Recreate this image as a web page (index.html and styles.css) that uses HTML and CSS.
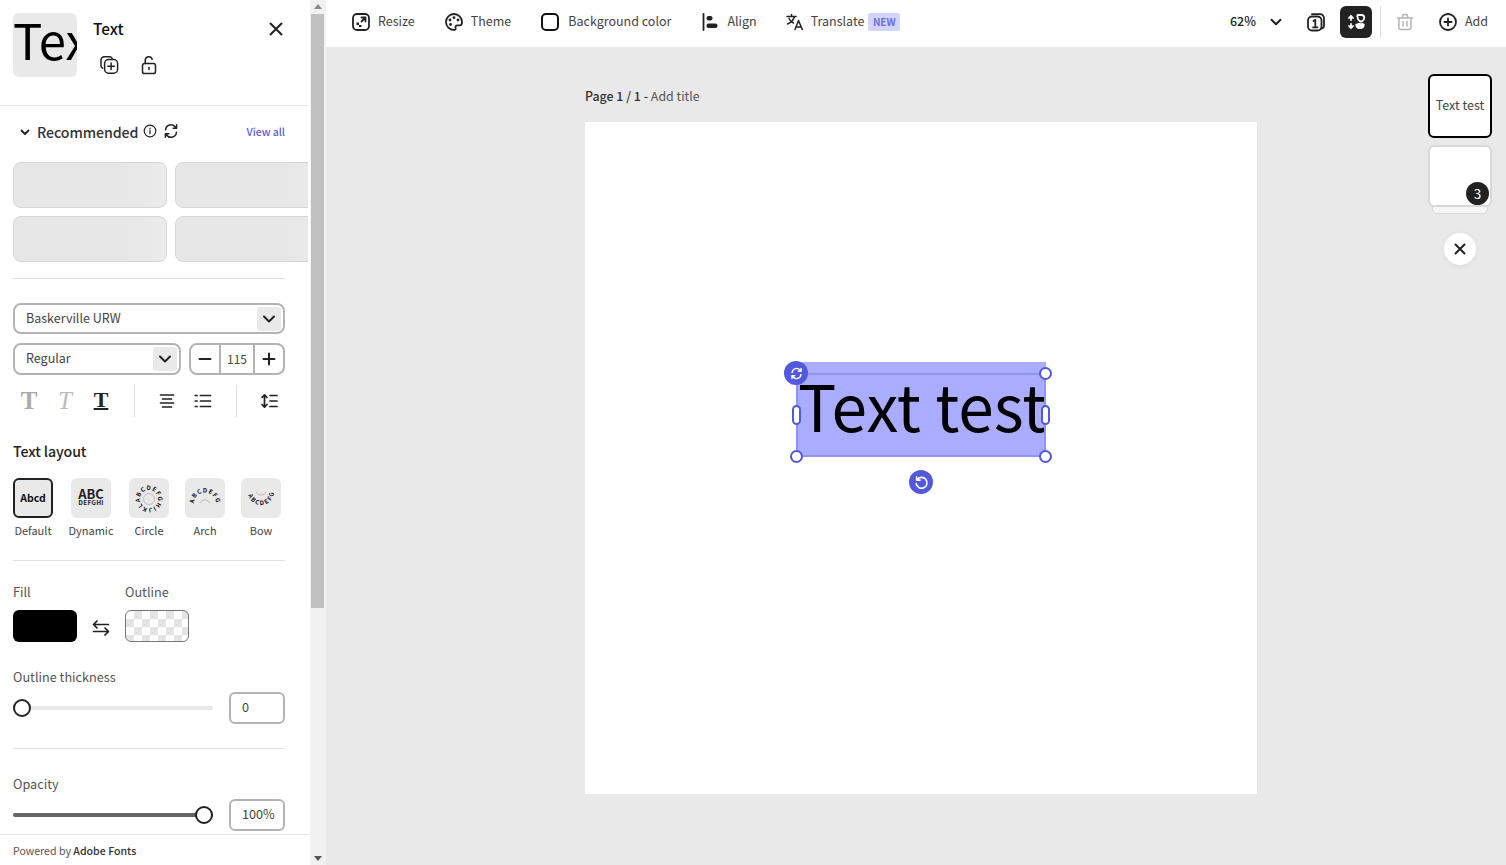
FILE: index.html
```html
<!DOCTYPE html>
<html lang="en">
<head>
<meta charset="utf-8">
<title>Text editor</title>
<link rel="stylesheet" href="styles.css">
</head>
<body>
<div class="app">
  <aside class="sidebar">
    <div class="panel">
      <header class="panel-head">
        <div class="preview"><span>Text</span></div>
        <div class="head-main">
          <div class="head-title">Text</div>
          <div class="head-actions">
            <svg class="ico" viewBox="0 0 20 20"><path d="M3.600 13.200A3 3 0 0 1 2 10.500V5a3.200 3.200 0 0 1 3.200-3.200h5.300a3 3 0 0 1 2.700 1.600"/><rect x="5.600" y="4.600" width="13" height="13.600" rx="4"/><path d="M12.100 8v6.600M8.800 11.300h6.600"/></svg>
            <svg class="ico" viewBox="0 0 20 20"><rect x="3.500" y="8.600" width="13" height="10" rx="2.200"/><path d="M6.200 8.600V5.400a3.600 3.600 0 0 1 7-1.200"/><path d="M10 12.400v2.200"/></svg>
          </div>
        </div>
        <svg class="ico close" viewBox="0 0 20 20"><path d="M4.500 4.500l11 11M15.500 4.500l-11 11"/></svg>
      </header>
      <section class="rec">
        <div class="rec-head">
          <svg class="ico chev-s" viewBox="0 0 12 12"><path d="M2.500 4.500L6 8l3.500-3.500"/></svg>
          <span class="rec-title">Recommended</span>
          <svg class="ico info" viewBox="0 0 14 14"><circle cx="7" cy="7" r="5.800"/><path d="M7 6.400v3.400M7 4v.9"/></svg>
          <svg class="ico sync" viewBox="0 0 16 16"><path d="M2.600 6.800A5.400 5.400 0 0 1 12.400 4l1.200 1.300M13.600 1.800v3.500h-3.500M13.400 9.200A5.400 5.400 0 0 1 3.600 12l-1.200-1.300M2.400 14.200v-3.500h3.500"/></svg>
          <a class="view-all">View all</a>
        </div>
        <div class="chips">
          <div class="chip"></div><div class="chip"></div>
          <div class="chip"></div><div class="chip"></div>
        </div>
      </section>
      <hr class="rule rule-rec">
      <div class="select select-font"><span>Baskerville URW</span><i class="sel-btn"><svg class="ico" viewBox="0 0 14 14"><path d="M2 4.500L7 9.500l5-5"/></svg></i></div>
      <div class="row-font">
        <div class="select select-weight"><span>Regular</span><i class="sel-btn"><svg class="ico" viewBox="0 0 14 14"><path d="M2 4.500L7 9.500l5-5"/></svg></i></div>
        <div class="stepper">
          <span class="step-btn"><svg class="ico" viewBox="0 0 14 14"><path d="M1.500 7h11"/></svg></span>
          <span class="step-val">115</span>
          <span class="step-btn"><svg class="ico" viewBox="0 0 14 14"><path d="M1.500 7h11M7 1.500v11"/></svg></span>
        </div>
      </div>
      <div class="tools">
        <span class="tool t-bold">T</span>
        <span class="tool t-ital">T</span>
        <span class="tool t-under">T</span>
        <i class="tool-sep"></i>
        <svg class="tool-ico ti-first" viewBox="0 0 18 18"><path d="M2.500 3h13M4.500 7h9M2.500 11h13M4.500 15h9"/></svg>
        <svg class="tool-ico ti-list" viewBox="0 0 18 18"><path d="M6.500 3.500h10M6.500 9h10M6.500 14.500h10M1.300 3.500h1.800M1.300 9h1.800M1.300 14.500h1.800"/></svg>
        <i class="tool-sep"></i>
        <svg class="tool-ico ti-first" viewBox="0 0 18 18"><path d="M4.500 3v12M2 5.500L4.500 2.800 7 5.500M2 12.500l2.500 2.700L7 12.500M10 3.500h7M10 9h7M10 14.500h7"/></svg>
      </div>
      <h3 class="layout-title">Text layout</h3>
      <div class="layouts">
        <div class="layout"><div class="tile tile-on"><b class="abcd">Abcd</b></div><span>Default</span></div>
        <div class="layout lw-dyn"><div class="tile"><b class="abc">ABC<small>DEFGHI</small></b></div><span>Dynamic</span></div>
        <div class="layout lw-cir"><div class="tile">
          <svg class="curve" viewBox="0 0 40 40"><circle class="c-thin" cx="20" cy="21" r="5.500"/><path id="pc" class="c-none" d="M11.500 24A9 9 0 1 1 28.500 18A9 9 0 1 1 11.500 24"/><text class="c-txt c-txt-circle"><textPath href="#pc">ABCDEFGHIJKL</textPath></text></svg>
        </div><span>Circle</span></div>
        <div class="layout lw-arc"><div class="tile">
          <svg class="curve" viewBox="0 0 40 40"><path class="c-thin" d="M15 25a5.500 5.500 0 0 1 10 0"/><path id="pa" class="c-none" d="M9 25.500A11 11 0 0 1 31 25.500"/><text class="c-txt c-txt-arc"><textPath href="#pa">ABCDEFG</textPath></text></svg>
        </div><span>Arch</span></div>
        <div class="layout lw-bow"><div class="tile">
          <svg class="curve" viewBox="0 0 40 40"><path class="c-thin" d="M15 14a5.500 5.500 0 0 0 10 0"/><path id="pb" class="c-none" d="M7 14A13 13 0 0 0 33 14"/><text class="c-txt c-txt-bow"><textPath href="#pb" startOffset="3">ABCDEFG</textPath></text></svg>
        </div><span>Bow</span></div>
      </div>
      <hr class="rule rule-lay">
      <div class="colors">
        <div class="color-col"><label>Fill</label><div class="swatch swatch-fill"></div></div>
        <svg class="ico swap" viewBox="0 0 20 20"><path d="M2.500 6.500h15M6 3L2.500 6.500 6 10M17.500 13.500h-15M14 10l3.500 3.500L14 17"/></svg>
        <div class="color-col"><label>Outline</label><div class="swatch swatch-out"></div></div>
      </div>
      <label class="field-label fl-thick">Outline thickness</label>
      <div class="slider-row">
        <div class="slider"><i class="knob knob-start"></i></div>
        <div class="num-input">0</div>
      </div>
      <hr class="rule rule-out">
      <label class="field-label fl-op">Opacity</label>
      <div class="slider-row">
        <div class="slider slider-full"><i class="knob knob-end"></i></div>
        <div class="num-input">100%</div>
      </div>
    </div>
    <footer class="panel-foot">Powered by <b>Adobe Fonts</b></footer>
  </aside>
  <div class="scrollbar">
    <i class="arrow-up"></i>
    <div class="sb-track"><div class="sb-thumb"></div></div>
    <i class="arrow-down"></i>
  </div>
  <main class="main">
    <nav class="topbar">
      <div class="tb-group">
        <div class="tb-item"><svg class="ico tb-ico" viewBox="0 0 18 18"><rect x="1" y="1" width="16" height="16" rx="4"/><path d="M9.500 4.500h4v4M13.500 4.500L9.500 8.500"/><path class="dots" d="M4.500 9.500h2.500v2.500h2.500v2H7v-2H4.500z"/></svg><span>Resize</span></div>
        <div class="tb-item"><svg class="ico tb-ico" viewBox="0 0 18 18"><path d="M9 1a8 8 0 1 0 0 16c1.600 0 2-1 1.600-2-.5-1.400.1-2.600 1.700-2.600h2.400c1.300 0 2.300-1 2.300-3.400A8 8 0 0 0 9 1z"/><circle class="dots" cx="5" cy="7" r="1.400"/><circle class="dots" cx="9" cy="4.700" r="1.400"/><circle class="dots" cx="13" cy="7" r="1.400"/><circle class="dots" cx="5.500" cy="11.500" r="1.400"/></svg><span>Theme</span></div>
        <div class="tb-item tb-bg"><i class="bg-box"></i><span>Background color</span></div>
        <div class="tb-item tb-align"><svg class="ico tb-ico-a" viewBox="0 0 16 18"><path d="M1.500 1v16"/><rect class="dots" x="4.500" y="3" width="6" height="4.500" rx="2"/><rect class="dots" x="4.500" y="10.500" width="11" height="4.500" rx="2"/></svg><span>Align</span></div>
        <div class="tb-item tb-trans"><svg class="ico tb-ico-t" viewBox="0 0 18 18"><path d="M1 3.500h9M5.500 1.500v2M8.500 3.500c-.8 3.500-3.300 6-7 7.500M3 5.500c.8 2 2.400 3.600 4.500 4.500M9 16.500l3.500-9 3.800 9M10.200 14h5"/></svg><span>Translate</span><em class="new">NEW</em></div>
      </div>
      <div class="tb-right">
        <span class="zoom-val">62%</span>
        <svg class="ico zoom-chev" viewBox="0 0 12 12"><path d="M1.500 3.800L6 8.300l4.500-4.500"/></svg>
        <div class="pages-ico"><svg class="ico" viewBox="0 0 20 20"><rect x="2" y="4.500" width="13.500" height="14" rx="4"/><path d="M6 2.200h7.500a4 4 0 0 1 4.500 4.500v7a3 3 0 0 1-2.500 2.800"/><path d="M7.500 9l1.800-1.200v7.500M7 15.300h4.500"/></svg></div>
        <div class="dark-btn"><svg class="ico" viewBox="0 0 22 22"><path d="M6 5v4M6 13v4M4 7l2-2.200L8 7M4 15l2 2.200L8 15"/><path d="M12.500 4h4a2.800 2.800 0 0 1 2.800 2.800v0a3.600 3.600 0 0 1-2 3.200l-1.300.8-1.300-.8a3.600 3.600 0 0 1-2-3.200v-.2A2.800 2.800 0 0 1 12.500 4z"/><path class="dots" d="M14.700 11.800l1.300.8 1.300-.8 2.300 1.300c.3 2.700-1.300 4.900-3.600 4.900h-2c-2.400 0-3.900-2.200-3.600-4.900z"/></svg></div>
        <i class="tb-sep"></i>
        <svg class="ico trash" viewBox="0 0 18 18"><path d="M1.500 5h15M6.500 5V3a1.500 1.500 0 0 1 1.500-1.500h2A1.500 1.500 0 0 1 11.500 3v2M3 5v9.500a2 2 0 0 0 2 2h8a2 2 0 0 0 2-2V5M7 8.500v4.500M11 8.500v4.500"/></svg>
        <div class="tb-item tb-add"><svg class="ico tb-ico" viewBox="0 0 18 18"><circle cx="9" cy="9" r="8"/><path d="M9 5.500v7M5.500 9h7"/></svg><span>Add</span></div>
      </div>
    </nav>
    <div class="canvas">
      <div class="page-wrap">
        <div class="page-label"><b>Page 1 / 1 -</b> Add title</div>
        <div class="page">
          <div class="sel-text">Text test</div>
          <div class="sel-frame"></div>
          <i class="h h-tr"></i><i class="h h-bl"></i><i class="h h-br"></i>
          <i class="h-side h-l"></i><i class="h-side h-r"></i>
          <span class="badge badge-sync"><svg class="ico" viewBox="0 0 16 16"><path d="M2.600 6.800A5.400 5.400 0 0 1 12.400 4l1.200 1.300M13.600 1.800v3.500h-3.500M13.400 9.200A5.400 5.400 0 0 1 3.600 12l-1.200-1.300M2.400 14.200v-3.500h3.500"/></svg></span>
          <span class="badge badge-rot"><svg class="ico" viewBox="0 0 16 16"><path d="M3.200 5.200A5.800 5.800 0 1 1 2.300 9M2.800 1.800v3.700h3.700"/></svg></span>
        </div>
      </div>
      <div class="rail">
        <div class="thumb thumb-on">Text test</div>
        <div class="stack"><div class="thumb thumb-blank"></div><div class="stack-under"></div><span class="count">3</span></div>
        <div class="rail-close"><svg class="ico" viewBox="0 0 14 14"><path d="M2.500 2.500l9 9M11.500 2.500l-9 9"/></svg></div>
      </div>
    </div>
  </main>
</div>
</body>
</html>
```
FILE: styles.css
```css
* { box-sizing: border-box; }
html, body { margin: 0; height: 100%; overflow: hidden; }
body { font-family: "Noto Sans CJK JP", "Noto Sans", sans-serif; color: #444; font-size: 12.500px; background: #fff; }
.app { display: flex; height: 865px; }
.ico { fill: none; stroke: #222; stroke-width: 1.8; stroke-linecap: round; stroke-linejoin: round; display: block; }
.dots { fill: #222; stroke: none; }
hr { margin: 0; border: 0; }

/* sidebar */
.sidebar { width: 309px; flex: none; display: flex; flex-direction: column; background: #fff; }
.panel { flex: 1; min-height: 0; overflow: hidden; padding-left: 13px; }
.panel-head { display: flex; height: 106px; margin-left: -13px; padding: 13px 0 0 13px; border-bottom: 1px solid #e6e6e6; }
.preview { width: 64px; height: 64px; background: #e9e9e9; border-radius: 6px; overflow: hidden; flex: none; }
.preview span { display: block; font-size: 49px; line-height: 52px; color: #000; white-space: nowrap; }
.head-main { margin-left: 16px; width: 173px; }
.head-title { font-size: 15.500px; line-height: 22px; color: #111; margin-top: 4px; font-weight: 500; }
.head-actions { display: flex; gap: 20px; margin: 16px 0 0 6px; }
.head-actions .ico { width: 20px; height: 20px; stroke-width: 1.500; }
.close { width: 20px; height: 20px; margin-top: 6px; flex: none; stroke-width: 2; }

.rec { width: 296px; }
.rec-head { display: flex; align-items: center; height: 20px; margin-top: 16px; width: 272px; }
.chev-s { width: 12px; height: 12px; margin-left: 6px; }
.rec-title { font-size: 14.200px; line-height: 20px; color: #333; margin-left: 6px; font-weight: 500; letter-spacing: -.1px; }
.info { width: 14px; height: 14px; margin-left: 5px; stroke-width: 1.200; margin-top: -2px; }
.sync { width: 16px; height: 16px; margin-left: 6px; stroke-width: 1.500; margin-top: -2px; }
.view-all { margin-left: auto; font-size: 10.500px; line-height: 16px; color: #5a5fd6; font-weight: 500; }
.chips { display: grid; grid-template-columns: 154px 154px; gap: 8px; margin-top: 20px; width: 295px; overflow: hidden; }
.chip { height: 46px; background: linear-gradient(90deg, #e7e7e7 70%, #ebebeb); border: 1px solid #d6d6d6; border-radius: 8px; }
.rule { width: 272px; border-top: 1px solid #e0e0e0; }
.rule-rec { margin-top: 16px; }

.select { display: flex; align-items: center; justify-content: space-between; height: 31px; border: 2px solid #b4b4b4; border-radius: 8px; padding: 0 2px 0 11px; font-size: 12.500px; color: #444; background: #fff; }
.select span { margin-top: -2px; }
.select-font { width: 272px; margin-top: 24px; }
.select-weight { width: 168px; height: 32px; }
.select-weight span { margin-top: -3px; }
.sel-btn { display: flex; align-items: center; justify-content: center; width: 24px; height: 24px; background: #e9e9e9; border-radius: 3px; }
.sel-btn .ico { width: 14px; height: 14px; stroke-width: 2; }
.row-font { display: flex; gap: 8px; width: 272px; margin-top: 9px; }
.stepper { display: flex; width: 96px; height: 32px; border: 2px solid #b4b4b4; border-radius: 8px; }
.step-btn { width: 28px; display: flex; align-items: center; justify-content: center; flex: none; }
.step-btn .ico { width: 14px; height: 14px; stroke-width: 2; }
.step-val { flex: 1; text-align: center; line-height: 27px; font-size: 12px; border-left: 2px solid #b4b4b4; border-right: 2px solid #b4b4b4; }

.tools { display: flex; align-items: center; height: 32px; margin-top: 10px; width: 272px; }
.tool { width: 36px; height: 32px; text-align: center; font: 700 25px/31px "Liberation Serif", serif; flex: none; }
.t-bold { color: #aaa; margin-left: -2px; }
.t-ital { color: #bbb; font-weight: 400; font-style: italic; }
.t-under { color: #222; font-weight: 700; font-size: 22px; line-height: 30px; text-decoration: underline; text-decoration-thickness: 2px; text-underline-offset: 1px; }
.tool-sep { width: 1px; height: 32px; background: #ddd; flex: none; margin: 0 15px; }
.tool-ico { width: 18px; height: 18px; flex: none; fill: none; stroke: #222; stroke-width: 1.700; stroke-linecap: round; stroke-linejoin: round; }
.ti-first { margin-left: 8px; margin-right: 18px; }
.ti-list { margin-right: 9px; }
.ti-first:last-child { margin-right: 0; }

.layout-title { margin: 23px 0 0; font-size: 14.200px; line-height: 22px; font-weight: 500; color: #222; letter-spacing: -.1px; }
.layouts { display: flex; margin-top: 16px; height: 62px; }
.layout { display: flex; flex-direction: column; align-items: center; width: 40px; flex: none; }
.layout span { font-size: 11px; line-height: 16px; margin-top: 4px; white-space: nowrap; color: #444; }
.lw-dyn { margin-left: 18px; }
.lw-cir { margin-left: 18px; }
.lw-arc { margin-left: 16px; }
.lw-bow { margin-left: 16px; }
.tile { width: 40px; height: 40px; background: #e9e9e9; border-radius: 6px; display: flex; align-items: center; justify-content: center; color: #222; flex: none; }
.tile-on { border: 2px solid #222; }
.abcd { font-size: 10.500px; line-height: 14px; color: #111; }
.abc { display: block; font-size: 13px; line-height: 11px; text-align: center; color: #222; margin-top: -2px; }
.abc small { display: block; font-size: 6.500px; line-height: 7px; letter-spacing: .2px; }
.curve { width: 40px; height: 40px; display: block; }
.c-thin { fill: none; stroke: #aaa; stroke-width: .7; }
.c-none { fill: none; stroke: none; }
.c-txt { font-size: 6px; font-weight: 700; fill: #111; }
.c-txt-circle { letter-spacing: .9px; }
.c-txt-arc { letter-spacing: 1px; }
.c-txt-bow { letter-spacing: 1.500px; }
.rule-lay { margin-top: 20px; }

.colors { display: flex; margin-top: 21px; }
.color-col label, .field-label { display: block; font-size: 12.700px; line-height: 20px; color: #555; }
.swatch { width: 64px; height: 32px; border-radius: 6px; margin-top: 8px; }
.swatch-fill { background: #000; }
.swatch-out { border: 1px solid #777; background: repeating-conic-gradient(#e4e4e4 0 25%, #fff 0 50%) 0 0 / 16px 16px; }
.swap { width: 20px; height: 20px; margin: 36px 14px 0 14px; stroke-width: 1.700; }
.fl-thick { margin-top: 25px; }
.slider-row { display: flex; align-items: center; justify-content: space-between; width: 272px; margin-top: 5px; }
.slider { position: relative; width: 200px; height: 4px; background: #e8e8e8; border-radius: 2px; }
.slider-full { background: #666; }
.knob { position: absolute; top: -7px; width: 18px; height: 18px; background: #fff; border: 2px solid #222; border-radius: 50%; }
.knob-start { left: 0; }
.knob-end { right: 0; }
.num-input { width: 56px; height: 32px; border: 2px solid #b4b4b4; border-radius: 6px; padding-left: 11px; line-height: 25px; font-size: 12.700px; color: #444; }
.rule-out { margin-top: 24px; }
.fl-op { margin-top: 25px; }

.panel-foot { height: 31px; margin: 0; padding: 6px 0 0 13px; border-top: 1px solid #e6e6e6; font-size: 10.600px; line-height: 20px; color: #555; flex: none; }
.panel-foot b { font-weight: 500; color: #333; }

/* scrollbar */
.scrollbar { width: 17px; flex: none; background: #f1f1f1; display: flex; flex-direction: column; align-items: center; border-left: 1px solid #fff; }
.arrow-up, .arrow-down { display: block; width: 0; height: 0; border: 4px solid transparent; flex: none; }
.arrow-up { border-bottom: 5px solid #8a8a8a; border-top: 0; margin: 4px 0 5px; }
.arrow-down { border-top: 5px solid #555; border-bottom: 0; margin: 4px 0 4px; }
.sb-track { flex: 1; width: 100%; padding: 0 1px; }
.sb-thumb { height: 594px; background: #c1c1c1; margin-right: 1px; }

/* main */
.main { flex: 1; min-width: 0; display: flex; flex-direction: column; }
.topbar { height: 47px; background: #fff; display: flex; align-items: center; justify-content: space-between; padding: 0 18px 4px 26px; flex: none; }
.tb-group, .tb-right { display: flex; align-items: center; }
.tb-group { gap: 30px; }
.tb-item { display: flex; align-items: center; gap: 8px; font-size: 12.500px; line-height: 20px; color: #444; white-space: nowrap; }
.tb-item span { margin-top: -2px; }
.tb-ico { width: 18px; height: 18px; stroke-width: 1.800; }
.tb-ico-a { width: 16px; height: 18px; stroke-width: 1.800; }
.tb-ico-t { width: 18px; height: 18px; stroke-width: 1.500; }
.bg-box { display: block; width: 18px; height: 18px; border: 2px solid #111; border-radius: 5px; }
.tb-bg { gap: 9px; }
.tb-align { gap: 9px; margin-left: 1px; }
.tb-align span { margin-right: -1px; }
.tb-trans { gap: 7px; }
.new { font-style: normal; font-size: 10px; font-weight: 700; line-height: 18px; padding: 0 4.500px; background: #d3d4fb; color: #6a6ee0; border-radius: 2px; margin-left: -3px; }
.zoom-val { font-size: 12.500px; color: #222; font-weight: 500; line-height: 20px; margin-top: -1px; }
.zoom-chev { width: 12px; height: 12px; margin-left: 14px; stroke-width: 2; }
.pages-ico { margin-left: 24px; width: 20px; height: 20px; }
.pages-ico .ico { width: 20px; height: 20px; stroke-width: 1.800; }
.dark-btn { width: 32px; height: 32px; background: #222; border-radius: 6px; margin-left: 14px; display: flex; align-items: center; justify-content: center; }
.dark-btn .ico { width: 22px; height: 22px; stroke: #fff; stroke-width: 1.800; }
.dark-btn .dots { fill: #fff; }
.tb-sep { display: block; width: 1px; height: 32px; background: #ddd; margin-left: 8px; }
.trash { width: 18px; height: 18px; margin-left: 15px; stroke: #b5b5b5; stroke-width: 1.500; }
.tb-add { margin-left: 25px; }

.canvas { flex: 1; position: relative; background: #e9e9e9; padding: 0 249px 0 259px; overflow: hidden; }
.page-wrap { width: 672px; }
.page-label { margin-top: 39px; height: 22px; font-size: 12.400px; line-height: 20px; color: #555; }
.page-label b { font-weight: 500; color: #333; }
.page { position: relative; width: 672px; height: 672px; margin-top: 14px; background: #fff; }
.sel-text { position: absolute; left: 211px; top: 240px; width: 250px; height: 95px; background: #aaacff; color: #000; font-size: 64px; line-height: 84px; white-space: nowrap; padding-left: 2px; }
.sel-frame { position: absolute; left: 211px; top: 251px; width: 250px; height: 84px; border: 2px solid #9094ee; }
.h { position: absolute; width: 13px; height: 13px; background: #fff; border: 2px solid #5359dc; border-radius: 50%; }
.h-tr { left: 454px; top: 245px; }
.h-bl { left: 205px; top: 328px; }
.h-br { left: 454px; top: 328px; }
.h-side { position: absolute; top: 283px; width: 9px; height: 20px; background: #fff; border: 2px solid #5359dc; border-radius: 5px; }
.h-l { left: 207px; }
.h-r { left: 456px; }
.badge { position: absolute; width: 24px; height: 24px; border-radius: 50%; background: #5359dc; display: flex; align-items: center; justify-content: center; }
.badge .ico { stroke: #fff; stroke-width: 1.700; }
.badge-sync { left: 199px; top: 239px; }
.badge-sync .ico { width: 13px; height: 13px; }
.badge-rot { left: 324px; top: 348px; }
.badge-rot .ico { width: 15px; height: 15px; }

.rail { position: absolute; left: 1102px; top: 27px; width: 64px; display: flex; flex-direction: column; align-items: center; }
.thumb { width: 64px; height: 64px; border-radius: 6px; background: #fff; text-align: center; }
.thumb-on { border: 2px solid #000; font-size: 12.500px; line-height: 58px; color: #444; }
.stack { position: relative; width: 64px; margin-top: 7px; height: 69px; }
.thumb-blank { position: relative; z-index: 1; height: 62px; border: 2px solid #d8d8d8; }
.stack-under { width: 56px; height: 8px; margin: -1px auto 0; background: #f6f6f6; border: 1px solid #d8d8d8; border-top: 0; border-radius: 0 0 5px 5px; }
.count { position: absolute; z-index: 2; right: 3px; top: 37px; width: 23px; height: 23px; border-radius: 50%; background: #222; color: #fff; font-size: 13.500px; line-height: 22px; text-align: center; }
.rail-close { width: 32px; height: 32px; margin-top: 19px; border-radius: 50%; background: #fff; display: flex; align-items: center; justify-content: center; box-shadow: 0 1px 6px rgba(0,0,0,.06); }
.rail-close .ico { width: 14px; height: 14px; stroke-width: 2; }
```
